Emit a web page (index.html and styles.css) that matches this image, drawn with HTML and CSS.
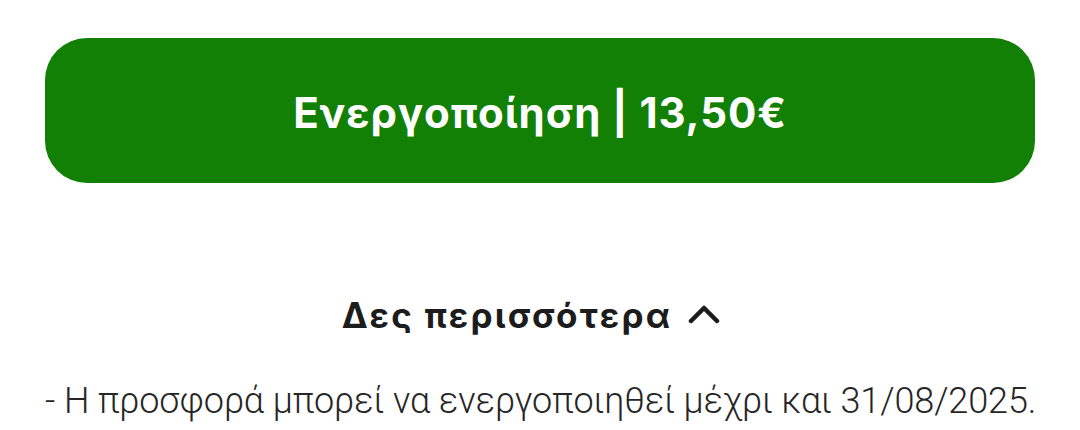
FILE: index.html
```html
<!DOCTYPE html>
<html lang="el">
<head>
<meta charset="utf-8">
<link rel="stylesheet" href="styles.css">
</head>
<body>
<main class="page">
  <button class="cta">Ενεργοποίηση | 13,50€</button>
  <div class="more">
    <span class="more-label">Δες περισσότερα</span>
    <svg class="chevron" viewBox="0 0 32 20" width="32" height="20" aria-hidden="true">
      <path d="M3 17 L16 4 L29 17" fill="none" stroke="#1c1c1c" stroke-width="4.5" stroke-linecap="round" stroke-linejoin="round"/>
    </svg>
  </div>
  <p class="note">- Η προσφορά μπορεί να ενεργοποιηθεί μέχρι και 31/08/2025.</p>
</main>
</body>
</html>
```
FILE: styles.css
```css
html, body {
  margin: 0;
  padding: 0;
  background: #ffffff;
}
.page {
  padding: 38px 45px 0 45px;
  display: flex;
  flex-direction: column;
  height: 430px;
  box-sizing: border-box;
  overflow: hidden;
}
.cta {
  display: flex;
  align-items: center;
  justify-content: center;
  height: 145px;
  width: 100%;
  border: none;
  border-radius: 42px;
  background: #128005;
  color: #ffffff;
  font-family: Inter, "Noto Sans", sans-serif;
  font-weight: 700;
  font-size: 42px;
  letter-spacing: 0.9px;
  padding: 4px 0 0 0;
}
.more {
  margin-top: 110px;
  margin-right: 18px;
  display: flex;
  align-items: center;
  justify-content: center;
  gap: 16px;
  height: 44px;
}
.more-label {
  font-family: Inter, "Noto Sans", sans-serif;
  font-weight: 700;
  font-size: 35px;
  letter-spacing: 2.2px;
  color: #1c1c1c;
}
.chevron {
  display: block;
  margin-top: -2px;
}
.note {
  margin: 44px 0 0 0;
  font-family: Roboto, "Noto Sans", sans-serif;
  font-weight: 300;
  font-size: 36px;
  letter-spacing: -0.1px;
  line-height: 40px;
  color: #262626;
  white-space: nowrap;
}
```
